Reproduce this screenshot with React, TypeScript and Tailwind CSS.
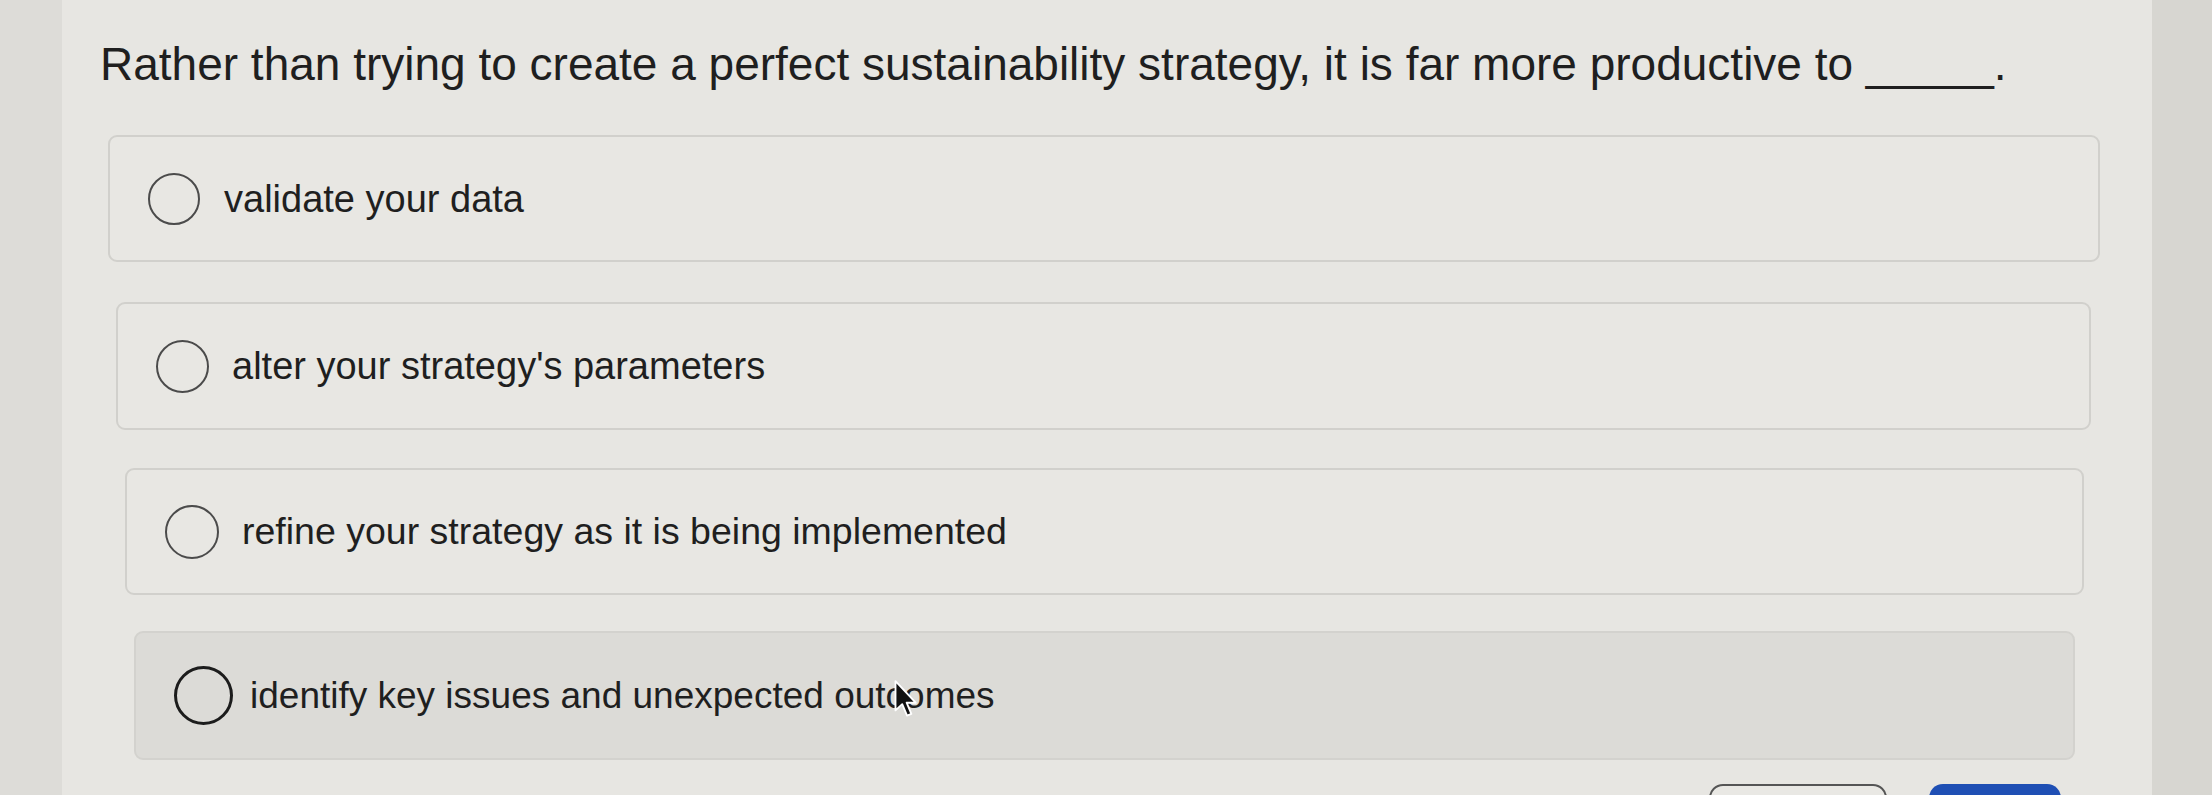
import React from 'react';

interface Choice {
  label: string;
  card: string;
  radio: string;
  text: string;
}

// small per-card offsets follow the slight perspective of the photographed screen
const choices: Choice[] = [
  {
    label: 'validate your data',
    card: 'ml-[46px] mr-[52px] h-[127px] bg-[#e8e7e3] border-[#d1d0cc]',
    radio: 'w-[52px] h-[52px] border-[2.5px] border-[#4b4b4b] mr-[24px]',
    text: 'text-[38px]',
  },
  {
    label: "alter your strategy's parameters",
    card: 'ml-[54px] mr-[61px] h-[128px] bg-[#e8e7e3] border-[#d1d0cc]',
    radio: 'w-[53px] h-[53px] border-[2.5px] border-[#4b4b4b] mr-[23px]',
    text: 'text-[38px]',
  },
  {
    label: 'refine your strategy as it is being implemented',
    card: 'ml-[63px] mr-[68px] h-[127px] bg-[#e8e7e3] border-[#d1d0cc]',
    radio: 'w-[54px] h-[54px] border-[2.5px] border-[#4b4b4b] mr-[23px]',
    text: 'text-[37.5px]',
  },
  {
    label: 'identify key issues and unexpected outcomes',
    card: 'ml-[72px] mr-[77px] h-[129px] bg-[#dcdbd7] border-[#d3d2ce]',
    radio: 'w-[59px] h-[59px] border-[3.5px] border-[#1c1c1c] mr-[17px]',
    text: 'text-[37px]',
  },
];

function Cursor() {
  return (
    <svg
      className="absolute left-[892px] top-[679px] w-[27px] h-[40px]"
      viewBox="0 0 17 28"
    >
      <path
        d="M1.5 1.5 L1.5 22 L6.2 17.6 L9.6 25.6 L12.6 24.4 L9.3 16.6 L15.6 16.6 Z"
        fill="#111"
        stroke="#fff"
        strokeWidth="1.3"
        strokeLinejoin="round"
      />
    </svg>
  );
}

export default function App() {
  return (
    <div className="relative w-full h-[795px] overflow-hidden flex bg-[#e6e5e1] font-['Liberation_Sans',Arial,sans-serif] text-[#1f1f1f]">
      {/* left edge of the screen */}
      <div className="w-[62px] shrink-0 bg-[#dddcd8]" />

      <div className="flex-1 flex flex-col pt-[38px] bg-[#e7e6e2]">
        <h1 className="ml-[38px] text-[46px] leading-[52px] font-normal whitespace-nowrap">
          Rather than trying to create a perfect sustainability strategy, it is far more productive to _____.
        </h1>

        <div className="mt-[45px] flex flex-col">
          {choices.map((c, i) => (
            <label
              key={c.label}
              className={
                'flex items-center pl-[38px] rounded-[9px] border-2 ' +
                c.card +
                (i === 0 ? '' : i === 1 ? ' mt-[40px]' : i === 2 ? ' mt-[38px]' : ' mt-[36px]')
              }
            >
              <span className={'shrink-0 rounded-full ' + c.radio} />
              <span className={'whitespace-nowrap leading-none ' + c.text}>{c.label}</span>
            </label>
          ))}
        </div>

        <div className="mt-[24px] mr-[91px] flex justify-end gap-[42px]">
          <button className="w-[178px] h-[60px] rounded-[14px] border-2 border-[#555] bg-[#e9e8e4]" />
          <button className="w-[132px] h-[60px] rounded-[14px] bg-[#1f4fb4]" />
        </div>
      </div>

      {/* right edge of the screen */}
      <div className="w-[60px] shrink-0 bg-[#d7d6d1]" />

      <Cursor />
    </div>
  );
}
